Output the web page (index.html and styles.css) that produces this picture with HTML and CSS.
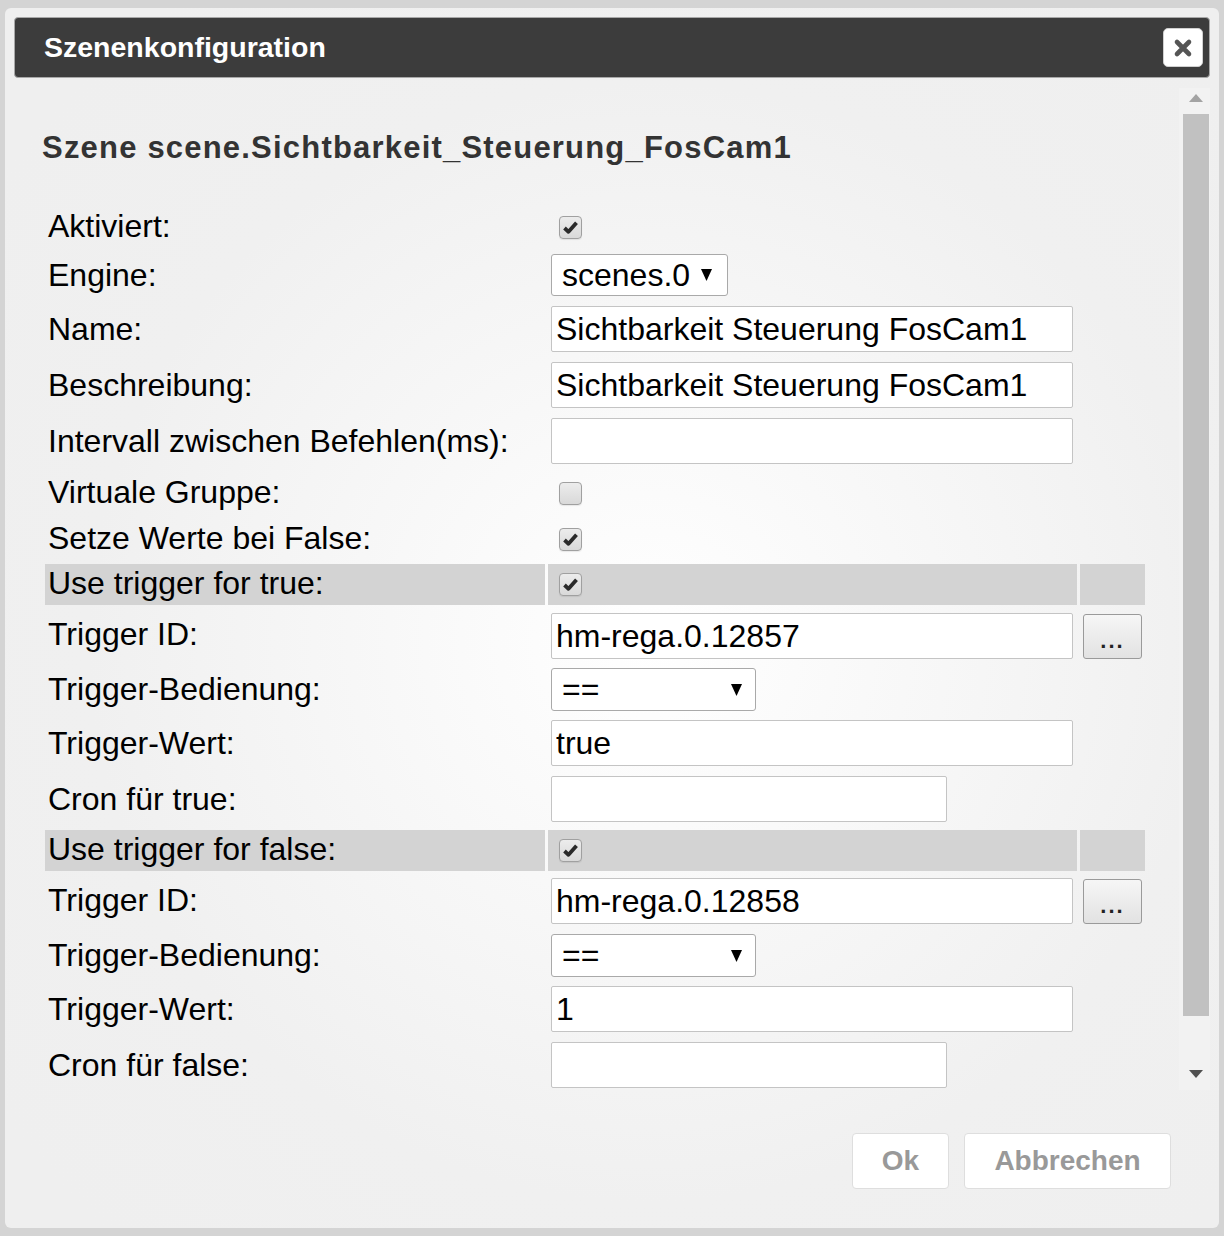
FILE: index.html
```html
<!DOCTYPE html>
<html lang="de">
<head>
<meta charset="utf-8">
<title>Szenenkonfiguration</title>
<link rel="stylesheet" href="styles.css">
</head>
<body>
<div class="dialog">
  <div class="titlebar">
    <span class="title">Szenenkonfiguration</span>
    <button class="close" type="button" aria-label="close">
      <svg width="20" height="20" viewBox="0 0 20 20"><path d="M4 4 L16 16 M16 4 L4 16" stroke="#555" stroke-width="4.6" stroke-linecap="round"/></svg>
    </button>
  </div>
  <div class="body">
    <div class="content">
      <h2 class="heading">Szene scene.Sichtbarkeit_Steuerung_FosCam1</h2>
      <div class="form">
        <div class="row r-check">
          <div class="label">Aktiviert:</div>
          <div class="value"><span class="cb checked"><svg width="15" height="13" viewBox="0 0 15 13"><path d="M1.5 7 L5.5 10.8 L13.5 1.8" fill="none" stroke="#2a2a2a" stroke-width="3.8" stroke-linejoin="round"/></svg></span></div>
          <div class="extra"></div>
        </div>
        <div class="row r-sel">
          <div class="label">Engine:</div>
          <div class="value"><div class="select sel-engine"><span>scenes.0</span><svg width="11" height="12" viewBox="0 0 11 12"><polygon points="0,0 11,0 5.5,12" fill="#000"/></svg></div></div>
          <div class="extra"></div>
        </div>
        <div class="row r-inp">
          <div class="label">Name:</div>
          <div class="value"><input class="inp" type="text" value="Sichtbarkeit Steuerung FosCam1"></div>
          <div class="extra"></div>
        </div>
        <div class="row r-inp">
          <div class="label">Beschreibung:</div>
          <div class="value"><input class="inp" type="text" value="Sichtbarkeit Steuerung FosCam1"></div>
          <div class="extra"></div>
        </div>
        <div class="row r-inp">
          <div class="label">Intervall zwischen Befehlen(ms):</div>
          <div class="value"><input class="inp" type="text" value=""></div>
          <div class="extra"></div>
        </div>
        <div class="row r-check">
          <div class="label">Virtuale Gruppe:</div>
          <div class="value"><span class="cb"></span></div>
          <div class="extra"></div>
        </div>
        <div class="row r-check">
          <div class="label">Setze Werte bei False:</div>
          <div class="value"><span class="cb checked"><svg width="15" height="13" viewBox="0 0 15 13"><path d="M1.5 7 L5.5 10.8 L13.5 1.8" fill="none" stroke="#2a2a2a" stroke-width="3.8" stroke-linejoin="round"/></svg></span></div>
          <div class="extra"></div>
        </div>
        <div class="row r-hl">
          <div class="label">Use trigger for true:</div>
          <div class="value"><span class="cb checked"><svg width="15" height="13" viewBox="0 0 15 13"><path d="M1.5 7 L5.5 10.8 L13.5 1.8" fill="none" stroke="#2a2a2a" stroke-width="3.8" stroke-linejoin="round"/></svg></span></div>
          <div class="extra"></div>
        </div>
        <div class="row r-id">
          <div class="label">Trigger ID:</div>
          <div class="value"><input class="inp" type="text" value="hm-rega.0.12857"></div>
          <div class="extra"><button class="dots" type="button">...</button></div>
        </div>
        <div class="row r-sel">
          <div class="label">Trigger-Bedienung:</div>
          <div class="value"><div class="select sel-op"><span>==</span><svg width="11" height="12" viewBox="0 0 11 12"><polygon points="0,0 11,0 5.5,12" fill="#000"/></svg></div></div>
          <div class="extra"></div>
        </div>
        <div class="row r-inp">
          <div class="label">Trigger-Wert:</div>
          <div class="value"><input class="inp" type="text" value="true"></div>
          <div class="extra"></div>
        </div>
        <div class="row r-inp">
          <div class="label">Cron für true:</div>
          <div class="value"><input class="inp inp-short" type="text" value=""></div>
          <div class="extra"></div>
        </div>
        <div class="row r-hl">
          <div class="label">Use trigger for false:</div>
          <div class="value"><span class="cb checked"><svg width="15" height="13" viewBox="0 0 15 13"><path d="M1.5 7 L5.5 10.8 L13.5 1.8" fill="none" stroke="#2a2a2a" stroke-width="3.8" stroke-linejoin="round"/></svg></span></div>
          <div class="extra"></div>
        </div>
        <div class="row r-id r-id2">
          <div class="label">Trigger ID:</div>
          <div class="value"><input class="inp" type="text" value="hm-rega.0.12858"></div>
          <div class="extra"><button class="dots" type="button">...</button></div>
        </div>
        <div class="row r-sel">
          <div class="label">Trigger-Bedienung:</div>
          <div class="value"><div class="select sel-op"><span>==</span><svg width="11" height="12" viewBox="0 0 11 12"><polygon points="0,0 11,0 5.5,12" fill="#000"/></svg></div></div>
          <div class="extra"></div>
        </div>
        <div class="row r-inp">
          <div class="label">Trigger-Wert:</div>
          <div class="value"><input class="inp" type="text" value="1"></div>
          <div class="extra"></div>
        </div>
        <div class="row r-inp">
          <div class="label">Cron für false:</div>
          <div class="value"><input class="inp inp-short" type="text" value=""></div>
          <div class="extra"></div>
        </div>
      </div>
    </div>
    <div class="scrollbar">
      <svg class="arr-up" width="14" height="8" viewBox="0 0 14 8"><polygon points="7,0 14,8 0,8" fill="#a3a3a3"/></svg>
      <div class="thumb"></div>
      <svg class="arr-down" width="14" height="8" viewBox="0 0 14 8"><polygon points="0,0 14,0 7,8" fill="#505050"/></svg>
    </div>
  </div>
  <div class="footer">
    <button class="btn btn-ok" type="button">Ok</button>
    <button class="btn btn-cancel" type="button">Abbrechen</button>
  </div>
</div>
</body>
</html>
```

FILE: styles.css
```css
html, body {
  margin: 0;
  padding: 0;
}
body {
  background: #d4d4d4;
  font-family: "Liberation Sans", Arial, sans-serif;
  width: 1224px;
  height: 1236px;
  overflow: hidden;
}
.dialog {
  margin: 8px 0 0 5px;
  width: 1214px;
  height: 1220px;
  box-sizing: border-box;
  padding: 9px;
  border-radius: 6px;
  background: radial-gradient(circle at 53% 52%, #ffffff 0px, #f8f8f8 260px, #f0f0f0 560px, #efefef 800px);
  display: flex;
  flex-direction: column;
}
.titlebar {
  height: 61px;
  box-sizing: border-box;
  background: #3c3c3c;
  border: 1px solid #a8a8a8;
  border-radius: 4px;
  display: flex;
  align-items: center;
  justify-content: space-between;
  padding: 0 6px 0 29px;
  flex: none;
}
.title {
  color: #fff;
  font-weight: bold;
  font-size: 28.5px;
}
.close {
  width: 40px;
  height: 39px;
  background: #fff;
  border: 1px solid #d0d0d0;
  border-radius: 5px;
  padding: 0;
  display: flex;
  align-items: center;
  justify-content: center;
}
.body {
  margin-top: 10px;
  height: 1002px;
  display: flex;
  flex: none;
  overflow: hidden;
}
.content {
  flex: 1;
  padding: 42px 0 0 28px;
  overflow: hidden;
}
.heading {
  margin: 0 0 40px 0;
  font-size: 31px;
  line-height: 36px;
  font-weight: bold;
  color: #333;
  letter-spacing: 1.2px;
}
.form {
  display: flex;
  flex-direction: column;
  gap: 3px;
  margin-left: 3px;
}
.row {
  display: grid;
  grid-template-columns: 500px 529px 65px;
  column-gap: 3px;
}
.r-check { height: 43px; }
.r-sel { height: 49px; }
.r-inp { height: 53px; }
.r-hl { height: 41px; }
.r-id { height: 55px; }
.label {
  font-size: 32px;
  color: #000;
  padding-left: 3px;
  display: flex;
  align-items: center;
  white-space: nowrap;
  margin-top: -2px;
}
.r-hl .label { margin-top: 0; padding-bottom: 2px; }
.value {
  padding-left: 3px;
  display: flex;
  align-items: center;
}
.r-hl .label, .r-hl .value, .r-hl .extra {
  background: #d3d3d3;
}
.r-inp .value, .r-sel .value, .r-id .value, .r-id .extra {
  align-items: flex-start;
}
.cb {
  width: 23px;
  height: 23px;
  box-sizing: border-box;
  margin-left: 8px;
  margin-top: -1px;
  border: 1px solid #a0a0a0;
  border-radius: 4px;
  background: linear-gradient(#ececec, #d9d9d9);
  display: flex;
  align-items: center;
  justify-content: center;
  box-shadow: 0 1px 1px rgba(0,0,0,0.08);
}
.r-hl .cb { margin-top: 0; }
.inp {
  margin: 2px 0 0 0;
  width: 522px;
  height: 46px;
  box-sizing: border-box;
  border: 1px solid #c4c4c4;
  border-radius: 2px;
  background: #fff;
  padding: 0 4px;
  font-family: "Liberation Sans", Arial, sans-serif;
  font-size: 32px;
  color: #000;
  outline: none;
}
.inp-short { width: 396px; }
.r-id .inp { margin-top: 5px; }
.r-id2 .inp { margin-top: 4px; }
.select {
  margin-top: 2px;
  height: 42px;
  box-sizing: border-box;
  border: 1px solid #a9a9a9;
  border-radius: 3px;
  background: #fff;
  display: flex;
  align-items: center;
  justify-content: space-between;
  padding: 0 14px 0 10px;
  font-size: 32px;
  color: #000;
}
.sel-engine { width: 177px; padding-right: 15px; }
.sel-op { width: 205px; height: 43px; padding-right: 13px; }
.extra { display: flex; }
.dots {
  margin: 6px 0 0 3px;
  width: 59px;
  height: 45px;
  box-sizing: border-box;
  border: 1px solid #9a9a9a;
  border-radius: 3px;
  background: linear-gradient(#f6f6f6, #e2e2e2);
  font-family: "Liberation Sans", Arial, sans-serif;
  font-size: 22px;
  font-weight: bold;
  color: #222;
  padding: 8px 0 0 0;
  letter-spacing: 2px;
  display: flex;
  align-items: center;
  justify-content: center;
}
.r-id2 .dots { margin-top: 5px; }
.scrollbar {
  width: 31px;
  flex: none;
  background: #f2f2f2;
  display: flex;
  flex-direction: column;
  align-items: center;
  padding-left: 2px;
  box-sizing: border-box;
}
.arr-up { margin-top: 6px; flex: none; }
.thumb {
  margin-top: 12px;
  width: 26px;
  height: 902px;
  background: #c1c1c1;
  flex: none;
}
.arr-down { margin-top: 54px; flex: none; }
.footer {
  flex: 1;
  display: flex;
  justify-content: flex-end;
  align-items: flex-start;
  gap: 15px;
  padding: 43px 39px 0 0;
}
.btn {
  height: 56px;
  box-sizing: border-box;
  background: #fff;
  border: 1px solid #dedede;
  border-radius: 4px;
  font-family: "Liberation Sans", Arial, sans-serif;
  font-size: 28px;
  font-weight: bold;
  color: #999;
  padding: 0;
}
.btn-ok { width: 97px; }
.btn-cancel { width: 207px; }
```
